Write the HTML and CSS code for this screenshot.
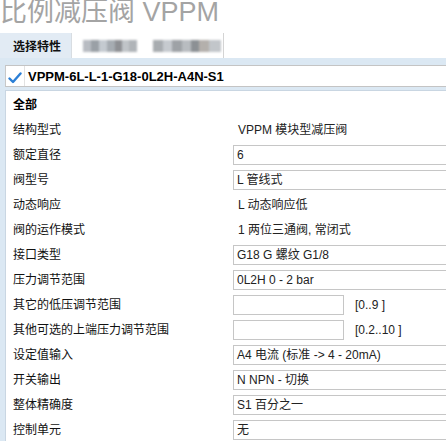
FILE: index.html
```html
<!DOCTYPE html>
<html lang="zh">
<head>
<meta charset="utf-8">
<title>比例减压阀 VPPM</title>
<link rel="stylesheet" href="styles.css">
</head>
<body>
<div class="title-wrap"><h1 class="title">比例减压阀 VPPM</h1></div>
<div class="tabs">
  <div class="tab active">选择特性</div>
  <div class="tab"><span class="blur b1"></span></div>
  <div class="tab last"><span class="blur b2"></span></div>
</div>
<div class="frame">
  <div class="code-row">
    <span class="check"><svg width="14" height="12" viewBox="0 0 14 12"><path d="M1.5 6.5 L5 10 L12.5 1.5" fill="none" stroke="#2b7fd6" stroke-width="2.4" stroke-linecap="round" stroke-linejoin="round"/></svg></span>
    <span class="code">VPPM-6L-L-1-G18-0L2H-A4N-S1</span>
  </div>
  <div class="panel">
    <div class="row head">全部</div>
    <div class="row"><div class="label">结构型式</div><div class="value">VPPM 模块型减压阀</div></div>
    <div class="row"><div class="label">额定直径</div><div class="box">6</div></div>
    <div class="row"><div class="label">阀型号</div><div class="box">L 管线式</div></div>
    <div class="row"><div class="label">动态响应</div><div class="value">L 动态响应低</div></div>
    <div class="row"><div class="label">阀的运作模式</div><div class="value">1 两位三通阀, 常闭式</div></div>
    <div class="row"><div class="label">接口类型</div><div class="box">G18 G 螺纹 G1/8</div></div>
    <div class="row"><div class="label">压力调节范围</div><div class="box">0L2H 0 - 2 bar</div></div>
    <div class="row"><div class="label">其它的低压调节范围</div><div class="box short"></div><span class="range">[0..9 ]</span></div>
    <div class="row"><div class="label">其他可选的上端压力调节范围</div><div class="box short"></div><span class="range">[0.2..10 ]</span></div>
    <div class="row"><div class="label">设定值输入</div><div class="box">A4 电流 (标准 -&gt; 4 - 20mA)</div></div>
    <div class="row"><div class="label">开关输出</div><div class="box">N NPN - 切换</div></div>
    <div class="row"><div class="label">整体精确度</div><div class="box">S1 百分之一</div></div>
    <div class="row"><div class="label">控制单元</div><div class="box">无</div></div>
  </div>
</div>
</body>
</html>
```
FILE: styles.css
```css
html, body {
  margin: 0;
  padding: 0;
  background: #ffffff;
}
body {
  width: 446px;
  overflow: hidden;
  font-family: "Liberation Sans", Arial, "Noto Sans CJK SC", sans-serif;
  font-size: 12px;
  color: #111;
}
.title-wrap {
  height: 33px;
  overflow: hidden;
}
.title {
  margin: -6px 0 0 0;
  font-size: 27px;
  line-height: 36px;
  font-weight: normal;
  color: #a4a4a4;
  white-space: nowrap;
}
.tabs {
  display: flex;
  height: 25px;
  width: 223px;
  border-right: 1px solid #d4d4d4;
}
.tab {
  width: 75px;
  display: flex;
  align-items: center;
  justify-content: center;
  background: #fff;
}
.tab.active {
  width: 72px;
  justify-content: flex-start;
  padding-left: 13px;
  box-sizing: border-box;
  background: #e2ebf4;
  font-weight: bold;
  border-right: 1px solid #d8dde2;
}
.blur {
  display: block;
  height: 12px;
  filter: blur(1.3px);
}
.b1 {
  width: 54px;
  background: linear-gradient(90deg, #b8bcc2 0 15%, #9aa0a6 15% 30%, #c4cad0 30% 45%, #a6acb2 45% 60%, #8e9094 60% 72%, #c0c4c8 72% 86%, #b0b4b8 86% 100%);
}
.b2 {
  width: 68px;
  margin-left: 4px;
  background: linear-gradient(90deg, #a8acb0 0 14%, #c6cacf 14% 28%, #9ea2a6 28% 42%, #b8bcc0 42% 56%, #8c9094 56% 68%, #b4b0ac 68% 82%, #c2c6ca 82% 100%);
}
.frame {
  background: #dbe8f3;
  padding: 7px 0 0 5px;
}
.code-row {
  display: flex;
  align-items: center;
  height: 20px;
  background: #fff;
  border-top: 1px solid #c4c4c4;
  border-bottom: 1px solid #c4c4c4;
  border-left: 1px solid #c8c8c8;
  margin-bottom: 3px;
}
.check {
  width: 19px;
  height: 20px;
  display: flex;
  align-items: center;
  justify-content: center;
  border-right: 1px solid #e2e2e2;
  padding-top: 3px;
  box-sizing: border-box;
}
.code {
  margin-left: 3px;
  font-size: 13px;
  font-weight: bold;
  color: #000;
}
.panel {
  background: #fff;
  border-top: 1px solid #c9d6e2;
  border-left: 1px solid #c9d6e2;
  padding-left: 7px;
}
.row {
  display: flex;
  align-items: center;
  height: 25px;
  white-space: nowrap;
}
.row.head {
  font-weight: bold;
  font-size: 12px;
  color: #000;
}
.label {
  width: 220px;
  flex: none;
  color: #111;
}
.value {
  padding-left: 5px;
  color: #222;
}
.box {
  flex: none;
  box-sizing: border-box;
  width: 214px;
  height: 20px;
  margin-top: 2px;
  border: 1px solid #c6c6c6;
  padding-left: 3px;
  line-height: 18px;
  color: #222;
  background: #fff;
}
.box.short {
  width: 111px;
}
.range {
  margin-left: 11px;
  margin-top: 2px;
  color: #222;
}
```
